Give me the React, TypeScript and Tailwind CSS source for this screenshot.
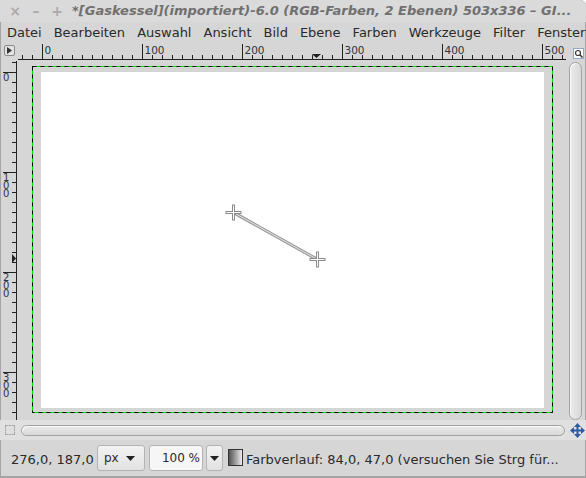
import React from "react";

const FONT = "font-['DejaVu_Sans','Liberation_Sans',sans-serif]";

const MENU = ["Datei", "Bearbeiten", "Auswahl", "Ansicht", "Bild", "Ebene", "Farben", "Werkzeuge", "Filter", "Fenster"];

const HRuler = () => {
  const ticks: number[] = [];
  for (let u = -20; u <= 520; u += 10) ticks.push(u);
  return (
    <svg width="548" height="18" className="block">
      {ticks.map((u) => {
        const x = 24.5 + u;
        const major = u % 100 === 0;
        return (
          <g key={u}>
            <line x1={x} x2={x} y1={major ? 1 : 12} y2={17} stroke="#222" strokeWidth="1" />
            {major && (
              <text x={x + 2} y={11} fontSize="10.5" fill="#2e3440" fontFamily="DejaVu Sans, sans-serif">
                {u}
              </text>
            )}
          </g>
        );
      })}
      <line x1="0" x2="548" y1="16.5" y2="16.5" stroke="#222" strokeWidth="1" />
      <polygon points="294,11 303,11 298.5,15" fill="#222" />
    </svg>
  );
};

const VRuler = () => {
  const ticks: number[] = [];
  for (let u = -10; u <= 340; u += 10) ticks.push(u);
  return (
    <div className="relative w-[18px] h-[359px]">
      <svg width="18" height="359" className="block">
        {ticks.map((u) => {
          const y = 11.5 + u;
          const major = u % 100 === 0;
          return <line key={u} x1={major ? 3 : 12} x2={17} y1={y} y2={y} stroke="#222" strokeWidth="1" />;
        })}
        <line x1="16.5" x2="16.5" y1="0" y2="359" stroke="#222" strokeWidth="1" />
        <polygon points="12,193 12,202 16,197.5" fill="#222" />
      </svg>
      {[0, 100, 200, 300].map((u) => (
        <div
          key={u}
          className="absolute left-[3px] w-[7px] break-all text-[10px] leading-[8px] text-[#2e3440]"
          style={{ top: 13 + u }}
        >
          {u}
        </div>
      ))}
    </div>
  );
};

const Cross = ({ x, y }: { x: number; y: number }) => (
  <g>
    <path d={`M${x - 8} ${y}H${x + 8}M${x} ${y - 8}V${y + 8}`} stroke="#8a8a8a" strokeWidth="3" />
    <path d={`M${x - 7} ${y}H${x + 7}M${x} ${y - 7}V${y + 7}`} stroke="#fff" strokeWidth="1" />
  </g>
);

const CanvasOverlay = () => (
  <svg width="548" height="359" className="absolute left-0 top-0">
    <rect x="14.5" y="5.5" width="520" height="346" fill="none" stroke="#00e000" strokeWidth="1" />
    <rect x="14.5" y="5.5" width="520" height="346" fill="none" stroke="#000" strokeWidth="1" strokeDasharray="4 4" />
    <line x1="215.5" y1="151.5" x2="299.5" y2="198.5" stroke="#9a9a9a" strokeWidth="3.2" />
    <line x1="215.5" y1="151.5" x2="299.5" y2="198.5" stroke="#e6e6e6" strokeWidth="1" />
    <Cross x={215.5} y={151.5} />
    <Cross x={299.5} y={198.5} />
  </svg>
);

const MoveIcon = () => (
  <svg width="15" height="15" viewBox="0 0 15 15">
    <path d="M7.5 2.5V12.5M2.5 7.5H12.5" stroke="#2f5b9f" strokeWidth="2" />
    <polygon points="7.5,0 11,4 4,4" fill="#2f5b9f" />
    <polygon points="7.5,15 11,11 4,11" fill="#2f5b9f" />
    <polygon points="0,7.5 4,4 4,11" fill="#2f5b9f" />
    <polygon points="15,7.5 11,4 11,11" fill="#2f5b9f" />
  </svg>
);

const NavIcon = () => (
  <svg width="11" height="11" viewBox="0 0 11 11">
    <rect x="0.5" y="0.5" width="10" height="10" fill="#fff" stroke="#3a64a8" strokeDasharray="1 1" />
    <circle cx="5" cy="5" r="2.5" fill="none" stroke="#333" strokeWidth="1.2" />
    <path d="M6.8 6.8L9.5 9.5" stroke="#333" strokeWidth="1.5" />
  </svg>
);

const Tri = () => (
  <svg width="9" height="5" viewBox="0 0 9 5">
    <polygon points="0,0 9,0 4.5,5" fill="#222" />
  </svg>
);

export default function App() {
  return (
    <div
      className={`${FONT} w-[586px] h-[478px] overflow-hidden bg-[#d6d6d6] text-[#2a2a2a] rounded-tr-[6px] shadow-[inset_1px_0_0_#a4a4a4,inset_-1px_0_0_#a4a4a4,inset_0_-2px_0_#a4a4a4,inset_0_1px_0_#c8c8c8] flex flex-col`}
    >
      {/* title bar */}
      <div className="h-[22px] flex items-center pl-[8px] text-[#ababab] font-bold text-[14px] shrink-0 bg-[#dadada]">
        <span className="w-[14px] shrink-0 text-center">×</span>
        <span className="w-[28px] shrink-0 text-center">–</span>
        <span className="w-[14px] shrink-0 text-center">+</span>
        <span className="ml-[8px] italic text-[#707070] text-[13px] whitespace-nowrap">
          *[Gaskessel](importiert)-6.0 (RGB-Farben, 2 Ebenen) 503x336 – GI...
        </span>
      </div>
      {/* menu */}
      <div className="h-[21px] flex items-center pl-px text-[13px] text-[#2a2a2a] shrink-0">
        {MENU.map((m) => (
          <span key={m} className="px-[6px] whitespace-nowrap">
            {m}
          </span>
        ))}
      </div>
      {/* main */}
      <div className="grid grid-cols-[18px_548px_20px] grid-rows-[18px_359px_20px] shrink-0">
        <div className="flex items-start pl-[4px] pt-[2px]">
          <div className="w-[11px] h-[11px] rounded-[2px] border border-[#8a8a8a] bg-[#e4e4e4] flex items-center justify-center">
            <svg width="5" height="7" viewBox="0 0 5 7">
              <polygon points="0,0 5,3.5 0,7" fill="#333" />
            </svg>
          </div>
        </div>
        <HRuler />
        <div className="flex items-start pl-[7px] pt-[5px]">
          <NavIcon />
        </div>
        <VRuler />
        <div className="relative">
          <div className="ml-[23px] mt-[11px] w-[503px] h-[336px] bg-white" />
          <CanvasOverlay />
        </div>
        <div className="pl-[3px] pt-px pr-[4px]">
          <div className="h-[358px] rounded-full border border-[#a2a2a2] bg-gradient-to-r from-[#ececec] to-[#d8d8d8] shadow-[inset_1px_1px_0_#fafafa]" />
        </div>
        <div className="flex items-center pl-[5px] bg-[#e0e0e0]">
          <div className="w-[10px] h-[10px] border border-dashed border-[#a8a8a8]" />
        </div>
        <div className="flex items-center pl-[3px] pr-px bg-[#e0e0e0]">
          <div className="h-[11px] w-full rounded-full border border-[#a2a2a2] bg-gradient-to-b from-[#ececec] to-[#d8d8d8] shadow-[inset_1px_1px_0_#fafafa]" />
        </div>
        <div className="flex items-center pl-[4px] bg-[#e0e0e0]">
          <MoveIcon />
        </div>
      </div>
      {/* status bar */}
      <div className="h-[38px] flex items-start pt-[5px] pl-[11px] text-[13px] text-[#2a2a2a]">
        <span className="mt-[5px] w-[86px] whitespace-nowrap">276,0, 187,0</span>
        <div className="w-[48px] h-[26px] rounded-[3px] border border-[#b4b4b4] bg-gradient-to-b from-[#f2f2f2] to-[#e2e2e2] flex items-center justify-between pl-[6px] pr-[9px] text-[12px]">
          <span>px</span>
          <Tri />
        </div>
        <div className="ml-[4px] w-[54px] h-[26px] rounded-[3px] border border-[#b4b4b4] bg-[#f6f6f6] flex items-center justify-end pr-[2px] text-[12px] whitespace-nowrap">
          100 %
        </div>
        <div className="ml-[3px] w-[17px] h-[26px] rounded-[3px] border border-[#b4b4b4] bg-gradient-to-b from-[#f2f2f2] to-[#e2e2e2] flex items-center justify-center">
          <Tri />
        </div>
        <div className="ml-[5px] mt-[4px] w-[15px] h-[17px] border border-[#333] bg-gradient-to-r from-[#555] to-[#eee]" />
        <span className="ml-[3px] mt-[5px] whitespace-nowrap">Farbverlauf: 84,0, 47,0 (versuchen Sie Strg für...</span>
      </div>
    </div>
  );
}
